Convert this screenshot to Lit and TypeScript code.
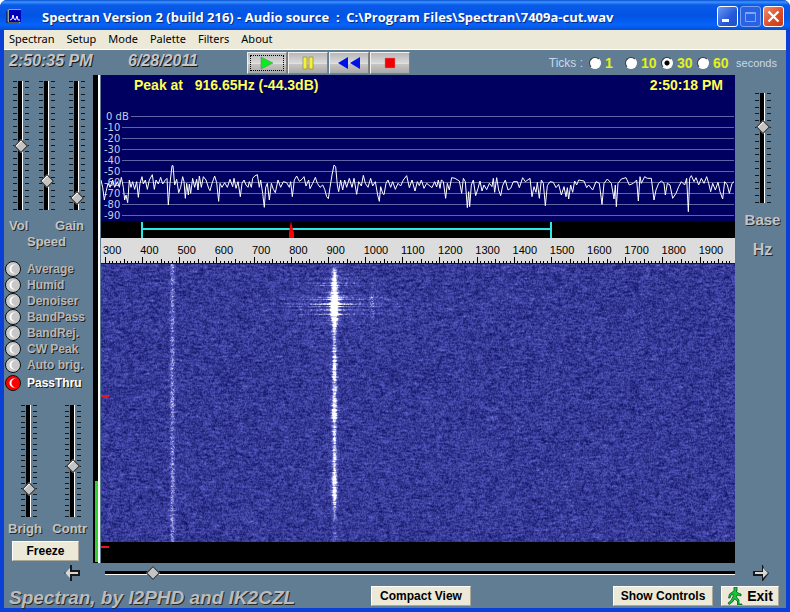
import { LitElement, html, css, svg } from "lit";
import { customElement, property, query } from "lit/decorators.js";
import { classMap } from "lit/directives/class-map.js";

/* ---------- vertical fader with engraved tick marks ---------- */
@customElement("tick-fader")
class TickFader extends LitElement {
  @property() label = "";
  @property({ type: Number }) value = 50;
  @property({ type: Number }) ticks = 21;

  static styles = css`
    :host { display: grid; grid-template-rows: 100%; width: 16px; justify-items: center; }
    .marks { grid-area: 1 / 1; width: 16px; display: flex; flex-direction: column; justify-content: space-between; }
    .mark { height: 1px; background: linear-gradient(90deg, #10181e 4px, transparent 4px 12px, #10181e 12px); }
    .fader {
      grid-area: 1 / 1; appearance: none; writing-mode: vertical-lr; direction: rtl;
      width: 10px; height: 100%; min-height: 0; margin: 0; outline: none; cursor: pointer;
      background: linear-gradient(90deg, #000 4px, #fff 4px 5px, transparent 5px) center / 6px 100% no-repeat;
    }
    .fader::-webkit-slider-thumb {
      appearance: none; width: 10px; height: 10px; box-sizing: border-box;
      background: #c4c4c4; border: 1px solid #222; box-shadow: inset 1px 0 #fff;
      transform: rotate(45deg);
    }
  `;

  render() {
    return html`
      <div class="marks">${Array.from({ length: this.ticks }, () => html`<span class="mark"></span>`)}</div>
      <input class="fader" type="range" min="0" max="100" aria-label=${this.label} .value=${String(this.value)} />
    `;
  }
}

/* ---------- spectrum curve: readings on a 1902 x 438 grid ---------- */
const CURVE: { dx: number; dy: number; pts: string }[] = [
  { dx: -3, dy: 75, pts: "3,240 8,262 13,300 18,275 24,250 30,262 38,240 44,262 52,245 58,262 64,232 70,262 74,300 78,285 83,308 88,240 93,262 98,245 104,268 110,245 115,292 120,250 126,230 130,252 136,240 142,268 148,240 157,224 163,268 168,240 175,252 182,232 188,252 196,240 201,235 205,315 210,250 216,197 219,197 224,255 230,238 236,278 242,262 248,230 252,245 256,295 260,250 265,285 268,252 272,280 278,235 284,262 290,238 294,270 298,228 304,262 310,230 318,240 326,265 330,272 336,250 344,228 350,248 356,304 360,250 366,262 374,248 382,262 390,238 398,260 402,235 408,265 414,245 421,290 426,250 432,240 438,255 444,262 448,245 454,262 458,235 464,228 472,224 478,262 482,240 488,280 493,322 497,262 502,250 508,300 514,250 520,268 526,278 534,240 542,262 550,245 560,248 568,262 572,245 577,290 583,240 590,228 598,244 606,238 612,230 618,258 626,240 630,266 638,250 646,232 652,250 660,262 668,255 674,268 680,290 685,296 690,262 696,225 702,195 707,200 712,255 716,275 722,240 728,270 734,240 740,262 748,235 756,262 762,235 770,283 776,245 784,258 790,226 796,250 804,262 812,235 818,258 826,245 833,285 838,304 842,260 848,280 852,284 858,250 864,240 872,262 878,245 886,268 894,250 902,258 910,240" },
  { dx: 897, dy: 240, pts: "20,62 28,98 36,75 45,108 52,80 58,92 64,75 72,100 80,85 96,98 104,80 110,96 115,75 120,100 124,75 130,80 137,130 142,85 148,105 155,68 165,70 178,78 185,115 190,70 196,80 202,158 206,110 209,155 214,90 220,75 227,122 234,100 240,78 246,108 252,90 260,104 268,85 276,95 280,70 284,112 290,68 296,105 302,122 308,92 316,75 324,105 332,100 340,80 352,80 358,98 368,68 376,80 390,70 396,125 402,95 408,112 412,82 418,130 424,75 430,85 436,152 442,92 450,80 460,82 468,98 476,88 484,120 492,95 498,125 502,98 506,132 512,90 518,112 524,78 530,90 536,75 552,78 560,98 566,90" },
  { dx: 1467, dy: 0, pts: "8,345 18,320 28,325 36,388 42,325 52,312 64,325 72,372 76,330 79,395 84,325 94,312 108,308 118,330 130,325 140,315 145,378 150,305 154,325 164,305 172,310 184,310 192,375 198,345 206,325 214,318 222,325 226,360 232,325 240,330 248,370 258,355 266,335 274,320 284,330 290,310 295,410 299,310 304,302 312,320 318,308 326,330 334,310 342,325 350,305 356,325 362,350 368,325 376,345 384,322 390,350 398,372 404,320 412,330 418,355 426,325 432,320" },
];
const CURVE_POINTS = CURVE.flatMap(({ dx, dy, pts }) =>
  pts.split(" ").map((p) => {
    const [x, y] = p.split(",").map(Number);
    return `${x + dx},${y + dy}`;
  })
).join(" ");

const LEVELS = ["0 dB", "-10", "-20", "-30", "-40", "-50", "-60", "-70", "-80", "-90"];
const FREQS = Array.from({ length: 17 }, (_, i) => 300 + i * 100);

/* ---------- spectrum, passband, frequency scale and waterfall ---------- */
@customElement("spectrum-view")
class SpectrumView extends LitElement {
  @query("canvas") canvas!: HTMLCanvasElement;

  static styles = css`
    :host { display: flex; flex-direction: column; min-width: 0; background: #000; }
    .plot { position: relative; height: 146px; background: #000060; font: 10px "DejaVu Sans", sans-serif; color: #c6cbe6; overflow: hidden; }
    .readout { display: flex; justify-content: space-between; height: 36px; padding: 0 12px 0 33px; font: bold 14px/20px "Liberation Sans", Arial, sans-serif; color: #ffff50; white-space: pre; }
    .level { display: flex; align-items: center; gap: 2px; height: 11px; padding: 0 1px 0 3px; line-height: 11px; }
    .name { min-width: 16px; white-space: pre; }
    .level:first-of-type .name { padding-left: 2px; }
    .rule { flex: 1; height: 1px; background: #5e64a4; }
    .curve { position: absolute; inset: 0; width: 100%; height: 100%; }
    .line { fill: none; stroke: #fff; stroke-width: 1; vector-effect: non-scaling-stroke; }
    .band { display: block; width: 100%; height: 17px; background: #000; }
    .scale { background: #dcdcdc; height: 25px; overflow: hidden; color: #000; font: 11px/24px "Liberation Sans", Arial, sans-serif; display: flex; flex-direction: column; }
    .freqs { display: grid; grid-template-columns: repeat(17, 1fr); height: 19px; margin: 0 -1px 0 2px; }
    .freq { min-width: 0; white-space: nowrap; }
    .ticks { display: block; width: 100%; height: 6px; }
    .fall { position: relative; flex: 1; min-height: 279px; overflow: hidden; border-top: 1px solid #10104a; box-sizing: border-box; }
    .canvas { display: block; width: 100%; height: 278px; }
    .stamps { position: absolute; inset: 131px auto auto 0; display: flex; flex-direction: column; gap: 149px; }
    .stamp { width: 8px; height: 2px; background: #f0141e; }
  `;

  firstUpdated() {
    const w = this.canvas.width;
    const h = this.canvas.height;
    const ctx = this.canvas.getContext("2d")!;
    const img = ctx.createImageData(w, h);
    let seed = 7409;
    const rnd = () => {
      seed = (seed * 1664525 + 1013904223) >>> 0;
      return seed / 4294967296;
    };
    const bell = (d: number, s: number) => Math.exp(-(d * d) / (2 * s * s));
    const above = new Float32Array(w);
    for (let y = 0; y < h; y++) {
      let n = 0;
      const burst = bell(y - 38, 14);
      const key = 0.15 + 0.15 * Math.sin(y / 7) + 0.6 * bell(y - 112, 12) + 0.75 * bell(y - 152, 10) + 0.8 * bell(y - 216, 12);
      const fade = Math.min(1, 0.25 + y / 14) * (y > 235 ? Math.max(0.25, 1 - (y - 235) / 40) : 1);
      const carrier = (0.6 + 0.4 * key + burst * 0.6) * fade * (0.6 + rnd() * 0.5);
      const spread = 1.4 + 1.1 * key * rnd() + burst * 1.6 * (0.6 + rnd() * 0.6);
      const streak = rnd() > 0.4 ? rnd() : 0.05;
      for (let x = 0; x < w; x++) {
        n = n * 0.5 + (rnd() - 0.5);
        const grain = n * 0.8 + above[x] * 0.45;
        above[x] = n;
        let v = 0.3 + grain * 0.3;
        v += bell(x - 71, 1.7) * (0.2 + rnd() * 0.24);
        v += bell(x - 233, spread) * carrier;
        v += burst * streak * (bell(x - 233, 12) * 0.5 + bell(x - 233, 38) * 0.26);
        v += burst * bell(x - 271, 1.3) * rnd() * 0.35;
        v = Math.max(0, Math.min(1, v));
        const i = (y * w + x) * 4;
        img.data[i] = v < 0.5 ? 12 + v * 138 : 81 + (v - 0.5) * 348;
        img.data[i + 1] = v < 0.5 ? 16 + v * 138 : 85 + (v - 0.5) * 340;
        img.data[i + 2] = v < 0.5 ? 94 + v * 186 : 187 + (v - 0.5) * 136;
        img.data[i + 3] = 255;
      }
    }
    ctx.putImageData(img, 0, 0);
  }

  render() {
    return html`
      <div class="plot">
        <header class="readout"><span>Peak at   916.65Hz (-44.3dB)</span><span>2:50:18 PM</span></header>
        ${LEVELS.map((l) => html`<div class="level"><span class="name">${l}</span><span class="rule"></span></div>`)}
        <svg class="curve" viewBox="0 0 1902 438" preserveAspectRatio="none">
          <polyline class="line" points=${CURVE_POINTS} />
        </svg>
      </div>
      <svg class="band" viewBox="0 0 634 17" preserveAspectRatio="none">
        <path d="M41 1V17M450 1V17M41 8H450" stroke="#28e8e8" stroke-width="2" fill="none" />
        <path d="M190 0L191 5L193 12V17H188V12L189 5Z" fill="#f00" />
      </svg>
      <div class="scale">
        <div class="freqs">${FREQS.map((f) => html`<span class="freq">${f}</span>`)}</div>
        <svg class="ticks" viewBox="0 0 634 6" preserveAspectRatio="none" shape-rendering="crispEdges">
          ${Array.from({ length: 169 }, (_, i) => {
            const x = 4 + i * 3.716;
            const tall = i % 10 === 0 ? 6 : i % 5 === 0 ? 4 : 2;
            return svg`<rect x=${x} y=${6 - tall} width="1" height=${tall} fill="#000" />`;
          })}
        </svg>
      </div>
      <div class="fall">
        <canvas class="canvas" width="634" height="278"></canvas>
        <div class="stamps"><span class="stamp"></span><span class="stamp"></span></div>
      </div>
    `;
  }
}

/* ---------- application window ---------- */
const FILTERS = ["Average", "Humid", "Denoiser", "BandPass", "BandRej.", "CW Peak", "Auto brig.", "PassThru"];
const MENUS = ["Spectran", "Setup", "Mode", "Palette", "Filters", "About"];

@customElement("app-root")
class AppRoot extends LitElement {
  static styles = css`
    :host { display: block; font-family: "Liberation Sans", Arial, sans-serif; }
    .window {
      display: flex; flex-direction: column; min-height: 100vh; box-sizing: border-box;
      border: solid #0a3fd8; border-width: 0 4px 4px; border-radius: 7px 7px 0 0; background: #607d93;
    }
    .title {
      display: flex; align-items: center; height: 30px; margin: 0 -4px; padding: 3px 6px 0 6px; box-sizing: border-box;
      background: linear-gradient(#0a4fd0 0, #3a93ff 2px, #0a5ae8 5px, #0254e4 16px, #0663fb 25px, #0450d0 30px);
      border-radius: 7px 7px 0 0; gap: 2px;
    }
    .name { flex: 1; margin: 0 0 0 18px; font: bold 13px "Open Sans", sans-serif; color: #fff; text-shadow: 1px 1px #0a2a80; white-space: pre; }
    .caption { width: 21px; height: 21px; padding: 0; border: 1px solid #fff; border-radius: 3px; background: linear-gradient(135deg, #6c98f4, #2458d8 60%, #2050c8); }
    .caption.idle { border-color: #7ca0f0; background: #2a62e4; }
    .caption.close { background: linear-gradient(135deg, #f09070, #dc4a24 60%, #c83c18); }
    .glyph { display: block; }
    .menu { display: flex; gap: 12px; height: 20px; padding: 0 5px; box-sizing: border-box; background: #ece9d8; border-bottom: 1px solid #fff; }
    .item { border: 0; padding: 0; background: none; font: 11px/18px "Noto Sans", sans-serif; color: #000; height: 18px; }
    .top { display: flex; align-items: center; height: 25px; }
    .clock { font: italic bold 16px/20px "Liberation Sans", Arial, sans-serif; color: #c6c6c6; text-shadow: 1px 1px #181818; margin-bottom: 4px; }
    .time { width: 119px; padding-left: 5px; }
    .date { width: 119px; }
    .transport { display: flex; gap: 1px; }
    .key { width: 40px; height: 22px; padding: 0; display: grid; place-items: center; border: 1px solid; border-color: #f0f0f0 #808080 #808080 #f0f0f0; background: linear-gradient(#b8b8b8, #d8d8d8 48%, #f4f4f4 50%, #c8c4c4 56%, #a8a8a8); }
    .key.on { outline: 1px dotted #000; outline-offset: -4px; }
    .rate { display: flex; align-items: center; margin-left: auto; margin-right: 9px; font-size: 12px; color: #c8d8ec; }
    .rate-name { margin-right: 6px; }
    .opt { display: flex; align-items: center; width: 36px; gap: 4px; font: bold 14px "Liberation Sans", Arial, sans-serif; color: #e4f020; }
    .unit { margin-left: 3px; font-size: 11px; }
    .dot { appearance: none; width: 12px; height: 12px; margin: 0; border-radius: 50%; background: #fff; border: 1px solid; border-color: #303840 #fff #fff #303840; }
    .dot:checked { background: radial-gradient(#000 2px, #fff 3px); }
    .main { flex: 1; display: flex; }
    .left { width: 89px; display: flex; flex-direction: column; padding-top: 6px; box-sizing: border-box; }
    .faders { display: grid; grid-template: 100% / 26px 30px auto; height: 129px; padding-left: 9px; }
    .faders.low { grid-template-columns: 44px auto; height: 112px; margin-top: 12px; padding-left: 17px; }
    .tag { font: bold 13px/16px "Liberation Sans", Arial, sans-serif; color: #c4c4c4; text-shadow: 1px 1px #282828; }
    .tags { display: flex; justify-content: space-between; padding: 0 9px 0 5px; margin-top: 8px; }
    .tags.low { margin-top: 4px; padding: 0 6px 0 4px; }
    .tag.mid { text-align: center; padding-right: 4px; }
    .leds { margin-top: 11px; }
    .led { display: flex; align-items: center; gap: 6px; height: 16px; padding-left: 1px; font: bold 12px "Liberation Sans", Arial, sans-serif; color: #b8b8b8; text-shadow: 1px 1px #202020; white-space: nowrap; }
    .led.lit { height: 20px; color: #fff; }
    .lamp { appearance: none; width: 16px; height: 16px; margin: 0; border-radius: 50%; border: 1px solid #101010; background: radial-gradient(circle at 10px 7px, #c8c8c8 4px, transparent 5px), radial-gradient(circle at 8px 7px, #fff 4px, #c8c8c8 5px); }
    .lamp:checked { background: radial-gradient(circle at 10px 7px, #f00 4px, transparent 5px), radial-gradient(circle at 8px 7px, #fff 4px, #f00 5px); }
    .btn { font: bold 12px "Liberation Sans", Arial, sans-serif; height: 20px; padding: 0; color: #000; background: #ece9d8; border: 1px solid; border-color: #fff #aca899 #aca899 #fff; width: 100px; }
    .btn.freeze { width: 67px; margin: 4px 0 0 8px; }
    .btn.exit { width: 58px; display: flex; align-items: center; justify-content: center; gap: 4px; font-size: 14px; }
    .meter { width: 5px; margin-right: 1px; display: flex; flex-direction: column; justify-content: flex-end; background: #000; border: 0 solid #fff; border-right-width: 2px; box-sizing: content-box; }
    .bar { height: 81px; margin: 0 0 1px 2px; background: #30d030; }
    .view { flex: 1; }
    .right { width: 51px; box-sizing: border-box; padding: 18px 3px 0 7px; display: flex; flex-direction: column; align-items: center; }
    .base { height: 110px; }
    .tag.big { font-size: 15px; margin-top: 9px; }
    .tag.unit-hz { font-size: 16px; margin: 14px 0 0; }
    .pan { display: flex; align-items: center; height: 20px; }
    .arrow { width: 18px; height: 18px; padding: 0; border: 0; background: none; }
    .arrow.prev { margin-left: 59px; }
    .arrow.next { margin: 0 16px 0 17px; }
    .track { appearance: none; flex: 1; min-width: 0; height: 10px; margin: 0 0 0 24px; background: linear-gradient(#000 3px, #fff 3px) center / 100% 4px no-repeat; }
    .track::-webkit-slider-thumb { appearance: none; width: 10px; height: 10px; box-sizing: border-box; background: #c4c4c4; border: 1px solid #222; transform: rotate(45deg); }
    .foot { display: flex; align-items: center; height: 25px; padding: 0 7px 0 5px; }
    .brand { font: italic bold 19px/24px "Liberation Sans", Arial, sans-serif; color: #bcbcbc; text-shadow: 1px 1px #282828; white-space: nowrap; margin-top: 3px; width: 362px; height: 22px; }
    .end { display: flex; gap: 8px; margin-left: auto; }
  `;

  render() {
    return html`
      <div class="window">
        <header class="title">
          <svg width="16" height="16" viewBox="0 0 16 16">
            <path d="M1 2L3 0H15V12L13 15H1Z" fill="#9c9c9c" />
            <path d="M3 1H15V13H3Z" fill="#0000b8" />
            <path d="M1 2V14H13" fill="none" stroke="#101020" />
            <path d="M4 11L6 10L7 6L8 10L9.500 11L11 7L12 11H14" fill="none" stroke="#fff" />
          </svg>
          <h1 class="name">Spectran Version 2 (build 216) - Audio source  :  C:\\Program Files\\Spectran\\7409a-cut.wav</h1>
          <button class="caption" aria-label="Minimize"><svg class="glyph" width="19" height="19"><path d="M4 12H11V15H4Z" fill="#fff" /></svg></button>
          <button class="caption idle" aria-label="Maximize"><svg class="glyph" width="19" height="19"><path d="M4.500 5.500H14.500V14.500H4.500ZM4 6.500H15" fill="none" stroke="#7fa6f4" /></svg></button>
          <button class="caption close" aria-label="Close"><svg class="glyph" width="19" height="19"><path d="M4.500 4.500L14.500 14.500M14.500 4.500L4.500 14.500" stroke="#fff" stroke-width="2.200" /></svg></button>
        </header>
        <nav class="menu">${MENUS.map((m) => html`<button class="item">${m}</button>`)}</nav>

        <div class="top">
          <time class="clock time">2:50:35 PM</time>
          <time class="clock date">6/28/2011</time>
          <div class="transport">
            <button class="key on" aria-label="Play"><svg width="14" height="14"><path d="M1 1V13L13 7Z" fill="#10e820" stroke="#508050" stroke-width=".5" /></svg></button>
            <button class="key" aria-label="Pause"><svg width="14" height="14"><path d="M2 1H6V13H2ZM8 1H12V13H8Z" fill="#f4f040" stroke="#908830" stroke-width=".7" /></svg></button>
            <button class="key" aria-label="Rewind"><svg width="24" height="14"><path d="M11 1V13L1 7ZM23 1V13L13 7Z" fill="#0010e8" /></svg></button>
            <button class="key" aria-label="Stop"><svg width="14" height="14"><path d="M2 2H12V12H2Z" fill="#f00000" stroke="#c08080" stroke-width=".5" /></svg></button>
          </div>
          <div class="rate">
            <span class="rate-name">Ticks :</span>
            ${[1, 10, 30, 60].map((t) => html`<label class="opt"><input class="dot" type="radio" name="ticks" ?checked=${t === 30} />${t}</label>`)}
            <span class="unit">seconds</span>
          </div>
        </div>

        <div class="main">
          <aside class="left">
            <div class="faders">
              <tick-fader label="Vol" value="50"></tick-fader>
              <tick-fader label="Speed" value="20"></tick-fader>
              <tick-fader label="Gain" value="6"></tick-fader>
            </div>
            <div class="tags"><span class="tag">Vol</span><span class="tag">Gain</span></div>
            <span class="tag mid">Speed</span>
            <div class="leds">
              ${FILTERS.map((f) => {
                const lit = f === "PassThru";
                return html`<label class=${classMap({ led: true, lit })}><input class="lamp" type="checkbox" ?checked=${lit} />${f}</label>`;
              })}
            </div>
            <div class="faders low">
              <tick-fader label="Brightness" value="23"></tick-fader>
              <tick-fader label="Contrast" value="45"></tick-fader>
            </div>
            <div class="tags low"><span class="tag">Brigh</span><span class="tag">Contr</span></div>
            <button class="btn freeze">Freeze</button>
          </aside>
          <div class="meter"><div class="bar"></div></div>
          <spectrum-view class="view"></spectrum-view>
          <aside class="right">
            <tick-fader class="base" label="Base" value="71" ticks="17"></tick-fader>
            <span class="tag big">Base</span>
            <span class="tag unit-hz">Hz</span>
          </aside>
        </div>

        <div class="pan">
          <button class="arrow prev" aria-label="Scroll left"><svg width="18" height="18"><path d="M7 1H9V6H17V12H9V17H7V13L1 9L7 5Z" fill="#181818" /><path d="M7 4V8H15V10H7V14L2 9Z" fill="#d8d8d8" /></svg></button>
          <input class="track" type="range" min="0" max="100" value="7" aria-label="Start frequency" />
          <button class="arrow next" aria-label="Scroll right"><svg width="18" height="18"><path d="M10 1H11L12 5L17 9L11 17H10V12H1V7H10Z" fill="#181818" /><path d="M11 4V8H3V10H11V14L16 9Z" fill="#d8d8d8" /></svg></button>
        </div>

        <footer class="foot">
          <span class="brand">Spectran, by I2PHD and IK2CZL</span>
          <button class="btn">Compact View</button>
          <div class="end">
            <button class="btn">Show Controls</button>
            <button class="btn exit">
              <svg width="16" height="18" viewBox="0 0 16 18"><path d="M7 0H10V4H9L11 6L14 7V9L10 8L9.500 10L12 13V17H15V18H10.500V14L7.500 12L5.500 15L2 17.500L1 16L4 13.500L6 9.500L6 7L4 8L3 11H1.500L2.500 7L6 4.500L7 4Z" fill="#10c838" stroke="#084818" stroke-width=".7" /></svg>
              Exit
            </button>
          </div>
        </footer>
      </div>
    `;
  }
}
